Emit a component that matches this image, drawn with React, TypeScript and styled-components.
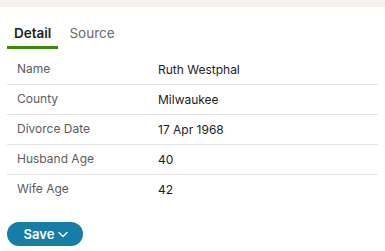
import React from 'react';
import styled, { createGlobalStyle } from 'styled-components';

const GlobalStyle = createGlobalStyle`
	body {
		margin: 0;
		background: #fff;
		font-family: Inter, 'Noto Sans', sans-serif;
	}
`;

const rows = [
	{ label: 'Name', value: 'Ruth Westphal' },
	{ label: 'County', value: 'Milwaukee' },
	{ label: 'Divorce Date', value: '17 Apr 1968' },
	{ label: 'Husband Age', value: '40' },
	{ label: 'Wife Age', value: '42' },
];

const App: React.FC = () => {
	return (
		<>
			<GlobalStyle />
			<TopBand />
			<Wrap>
				<Tabs>
					<Tab $active>Detail</Tab>
					<Tab>Source</Tab>
				</Tabs>
				<Table>
					{rows.map((row, i) => (
						<Row key={row.label} $last={i === rows.length - 1}>
							<Label>{row.label}</Label>
							<Value>{row.value}</Value>
						</Row>
					))}
				</Table>
				<SaveButton>
					Save
					<svg width='10' height='7' viewBox='0 0 10 7' fill='none'>
						<path d='M1 1.5L5 5.5L9 1.5' stroke='#fff' strokeWidth='1.4' strokeLinecap='round' strokeLinejoin='round' />
					</svg>
				</SaveButton>
			</Wrap>
		</>
	);
};

const TopBand = styled.div`
	height: 7px;
	background: #f5f1ee;
`;

const Wrap = styled.div`
	padding: 15px 7px 0;
`;

const Tabs = styled.div`
	display: flex;
	gap: 4px;
`;

const Tab = styled.div<{ $active?: boolean }>`
	padding: 3px 7px 5px;
	font-size: 13.5px;
	line-height: 16px;
	font-weight: ${(p) => (p.$active ? 600 : 400)};
	color: ${(p) => (p.$active ? '#1e1e1e' : '#6b6b6b')};
	border-bottom: 3px solid ${(p) => (p.$active ? '#3d8a0a' : 'transparent')};
`;

const Table = styled.div`
	margin-top: 6px;
	display: flex;
	flex-direction: column;
`;

const Row = styled.div<{ $last?: boolean }>`
	display: grid;
	grid-template-columns: 141px 1fr;
	height: 30px;
	align-items: center;
	padding-left: 10px;
	border-bottom: 1px solid ${(p) => (p.$last ? 'transparent' : '#e2e2e2')};
	font-size: 12px;
	box-sizing: border-box;
`;

const Label = styled.div`
	color: #5c5c5c;
	margin-top: -2px;
`;

const Value = styled.div`
	color: #1c1c1c;
`;

const SaveButton = styled.button`
	margin-top: 17px;
	display: flex;
	align-items: center;
	justify-content: center;
	gap: 4px;
	width: 76px;
	height: 24px;
	border: none;
	border-radius: 12px;
	background: #167da6;
	color: #fff;
	font-family: Inter, 'Noto Sans', sans-serif;
	font-size: 13px;
	font-weight: 600;
	padding: 0 0 0 2px;
`;

export default App;
